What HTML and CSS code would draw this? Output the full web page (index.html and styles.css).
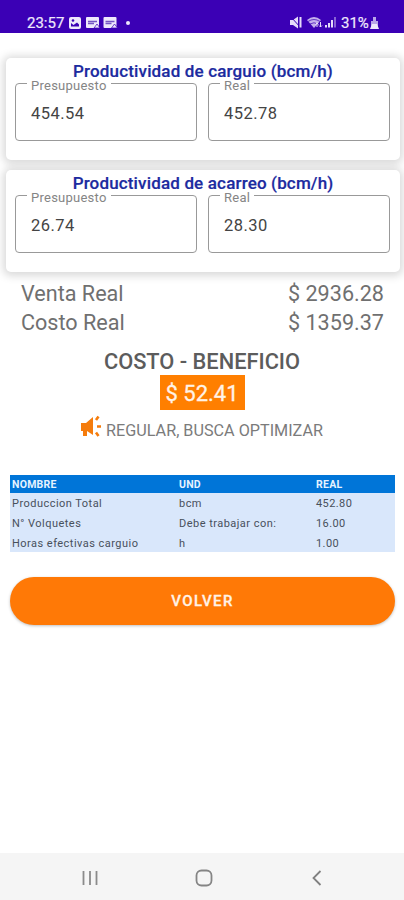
FILE: index.html
```
<!DOCTYPE html>
<html lang="es">
<head>
<meta charset="utf-8">
<title>Costo - Beneficio</title>
<link rel="stylesheet" href="styles.css">
</head>
<body>
<header class="status">
  <span class="clock">23:57</span>
  <svg class="notif" width="51" height="12" viewBox="0 0 51 12">
    <rect x="0" y="0" width="12" height="12" rx="2" fill="#eee8fc"/>
    <path d="M2 9.500V6l2.500 2L8 5.500l2 2v2z" fill="#3b00b5"/><circle cx="4" cy="3.500" r="1.300" fill="#3b00b5"/>
    <g id="app">
      <rect x="17" y="0" width="13" height="11" rx="1" fill="#eee8fc"/>
      <path d="M19 4.500h9M19 6.500h6" stroke="#7455c4" stroke-width="1.500"/>
      <path d="M25 11l3-4 3 4z" fill="#eee8fc" stroke="#3b00b5" stroke-width=".7"/>
    </g>
    <use href="#app" x="17.500"/>
  </svg>
  <span class="dot"></span>
  <svg class="signals" width="47" height="13" viewBox="0 0 47 13" fill="#e6dcfa">
    <path d="M0 4h3l5-3.500v12L3 9H0z"/><path d="M1 1l10 11" stroke="#3b00b5"/><path d="M10.500 1v10.500" stroke="#e6dcfa" stroke-width="2"/>
    <path d="M17 4q7-6 14 0l-7 8z" opacity=".8"/><path d="M18 5.500q6-4 12 0M20 8q4-2.500 8 0" fill="none" stroke="#3b00b5" stroke-width=".7"/>
    <path d="M27 11V7m-1.500 1.500L27 7l1.500 1.500M30.500 6v5m-1.500-1.500l1.500 1.500 1.500-1.500" fill="none" stroke="#e6dcfa"/>
    <path d="M35 9h2v2.500h-2zM38 7h2v4.500h-2zM41 4h2v7.500h-2z"/><path d="M44 1h2v10.500h-2z" opacity=".45"/>
  </svg>
  <span class="percent">31%</span>
  <svg class="battery" width="9" height="12" viewBox="0 0 9 12"><path d="M3 0h3v4h2v8H1V4h2z" fill="#b9a5e8"/><path d="M2 7h5l2 5H0z" fill="#eee8fc"/></svg>
</header>
<main>
  <section class="card">
    <h2>Productividad de carguio (bcm/h)</h2>
    <div class="fields">
      <fieldset><legend>Presupuesto</legend><span class="value">454.54</span></fieldset>
      <fieldset><legend>Real</legend><span class="value">452.78</span></fieldset>
    </div>
  </section>
  <section class="card">
    <h2>Productividad de acarreo (bcm/h)</h2>
    <div class="fields">
      <fieldset><legend>Presupuesto</legend><span class="value">26.74</span></fieldset>
      <fieldset><legend>Real</legend><span class="value">28.30</span></fieldset>
    </div>
  </section>
  <section class="totals">
    <div class="total"><span>Venta Real</span><span>$ 2936.28</span></div>
    <div class="total"><span>Costo Real</span><span>$ 1359.37</span></div>
  </section>
  <section class="result">
    <h1>COSTO - BENEFICIO</h1>
    <div class="amount">$ 52.41</div>
    <div class="advice">
      <svg width="22" height="24" viewBox="0 0 22 24"><path d="M0 8h5l7-6v18l-6-4v5H2v-5H0z" fill="#f57c0c"/><path d="M15 5l2.500-3.500M16 11.500h4M15 17.500l2.500 3.500" stroke="#f57c0c" stroke-width="2.600"/></svg>
      <span>REGULAR, BUSCA OPTIMIZAR</span>
    </div>
  </section>
  <table>
    <thead><tr><th class="name">NOMBRE</th><th class="unit">UND</th><th>REAL</th></tr></thead>
    <tbody>
      <tr><td>Produccion Total</td><td>bcm</td><td class="real">452.80</td></tr>
      <tr><td>N° Volquetes</td><td>Debe trabajar con:</td><td class="real">16.00</td></tr>
      <tr><td>Horas efectivas carguio</td><td>h</td><td class="real">1.00</td></tr>
    </tbody>
  </table>
  <button class="back">VOLVER</button>
</main>
<nav>
  <svg width="16" height="16" viewBox="0 0 16 16" stroke="#8b8b8b" stroke-width="1.800"><path d="M1.500 1v14M8 1v14M14.500 1v14"/></svg>
  <svg class="home" width="18" height="18" viewBox="0 0 18 18" fill="none" stroke="#858585" stroke-width="1.800"><rect x="1.500" y="1.500" width="15" height="15" rx="5"/></svg>
  <svg width="10" height="16" viewBox="0 0 10 16" fill="none" stroke="#808080" stroke-width="1.800"><path d="M8.500 1L1.500 8l7 7"/></svg>
</nav>
</body>
</html>
```
FILE: styles.css
```
* { box-sizing: border-box; }
body { margin: 0; height: 900px; display: flex; flex-direction: column; background: #fff; font-family: Roboto, sans-serif; color: #666; overflow: hidden; }
h1, h2 { margin: 0; white-space: nowrap; }
.status { height: 33px; flex: none; display: flex; align-items: center; padding: 12px 25px 0 27px; background: #3b00b5; color: #eee8fc; }
.clock, .percent { font-size: 15px; line-height: 20px; -webkit-text-stroke: .2px; }
.clock { width: 42px; }
.notif { overflow: visible; }
.dot { width: 4px; height: 4px; border-radius: 50%; background: #eee8fc; margin-left: 6px; }
.signals { margin-left: auto; }
.percent { margin-left: 4px; width: 29px; }
main { flex: 1; padding-top: 25px; }
.card { height: 102px; margin: 0 4px 10px 6px; border-radius: 5px; background: #fff; box-shadow: 0 1px 8px 3px rgba(0,0,0,.15); }
.card + .card { margin-bottom: 0; }
.card h2 { position: relative; z-index: 1; height: 25px; padding-top: 5px; text-align: center; font-size: 17px; line-height: 16px; font-weight: 500; letter-spacing: .16px; color: #1c2b9f; -webkit-text-stroke: .2px; }
.fields { display: flex; gap: 11px; padding: 0 10px 0 9px; }
fieldset { position: relative; flex: 1; min-width: 0; height: 58px; margin: 0; padding: 0 15px; border: 1px solid #999; border-radius: 4px; }
legend { position: absolute; top: -4px; left: 11px; padding: 0 4px; background: #fff; font-size: 13px; line-height: 11px; letter-spacing: .25px; color: #858585; }
.value { display: block; font-size: 16.500px; line-height: 59px; letter-spacing: .45px; color: #444; }
.totals { padding: 7px 20px 0 21px; }
.total { display: flex; justify-content: space-between; height: 29px; font-size: 21.600px; line-height: 29px; color: #707070; }
.result { display: flex; flex-direction: column; align-items: center; padding-top: 11px; }
h1 { height: 27px; font-size: 21.800px; line-height: 28px; font-weight: 500; color: #5c5c5c; }
.amount { width: 85px; height: 35px; background: #ff7f00; color: #fff3e7; font-size: 22px; line-height: 37px; text-align: center; -webkit-text-stroke: .3px; }
.advice { display: flex; height: 36px; padding-top: 5px; gap: 3px; font-size: 16.200px; line-height: 32px; color: #7b7b7b; }
table { width: 385px; margin: 29px 0 0 10px; table-layout: fixed; border-collapse: collapse; background: #d9e7fb; font-size: 11px; letter-spacing: .47px; color: #48505b; }
th, td { padding: 0 2px; text-align: left; height: 20px; line-height: 14px; }
td { padding-top: 2px; }
td.real { letter-spacing: .4px; }
tr:last-child td { height: 19px; }
th { height: 18px; padding-top: 2px; background: #0075d8; color: #e6f3ff; font-size: 10.500px; font-weight: 700; letter-spacing: .25px; }
.name { width: 167px; }
.unit { width: 137px; }
.back { display: block; width: 385px; height: 48px; margin: 25px 0 0 10px; border: 0; border-radius: 24px; background: #ff7906; color: #fff3e7; font: 500 15px Roboto, sans-serif; letter-spacing: 1.400px; -webkit-text-stroke: .3px; box-shadow: 0 1px 3px rgba(0,0,0,.25); }
nav { height: 47px; flex: none; display: flex; align-items: center; justify-content: space-between; padding: 3px 82px 0; background: #f5f5f5; }
.home { margin-right: 3px; }
```
